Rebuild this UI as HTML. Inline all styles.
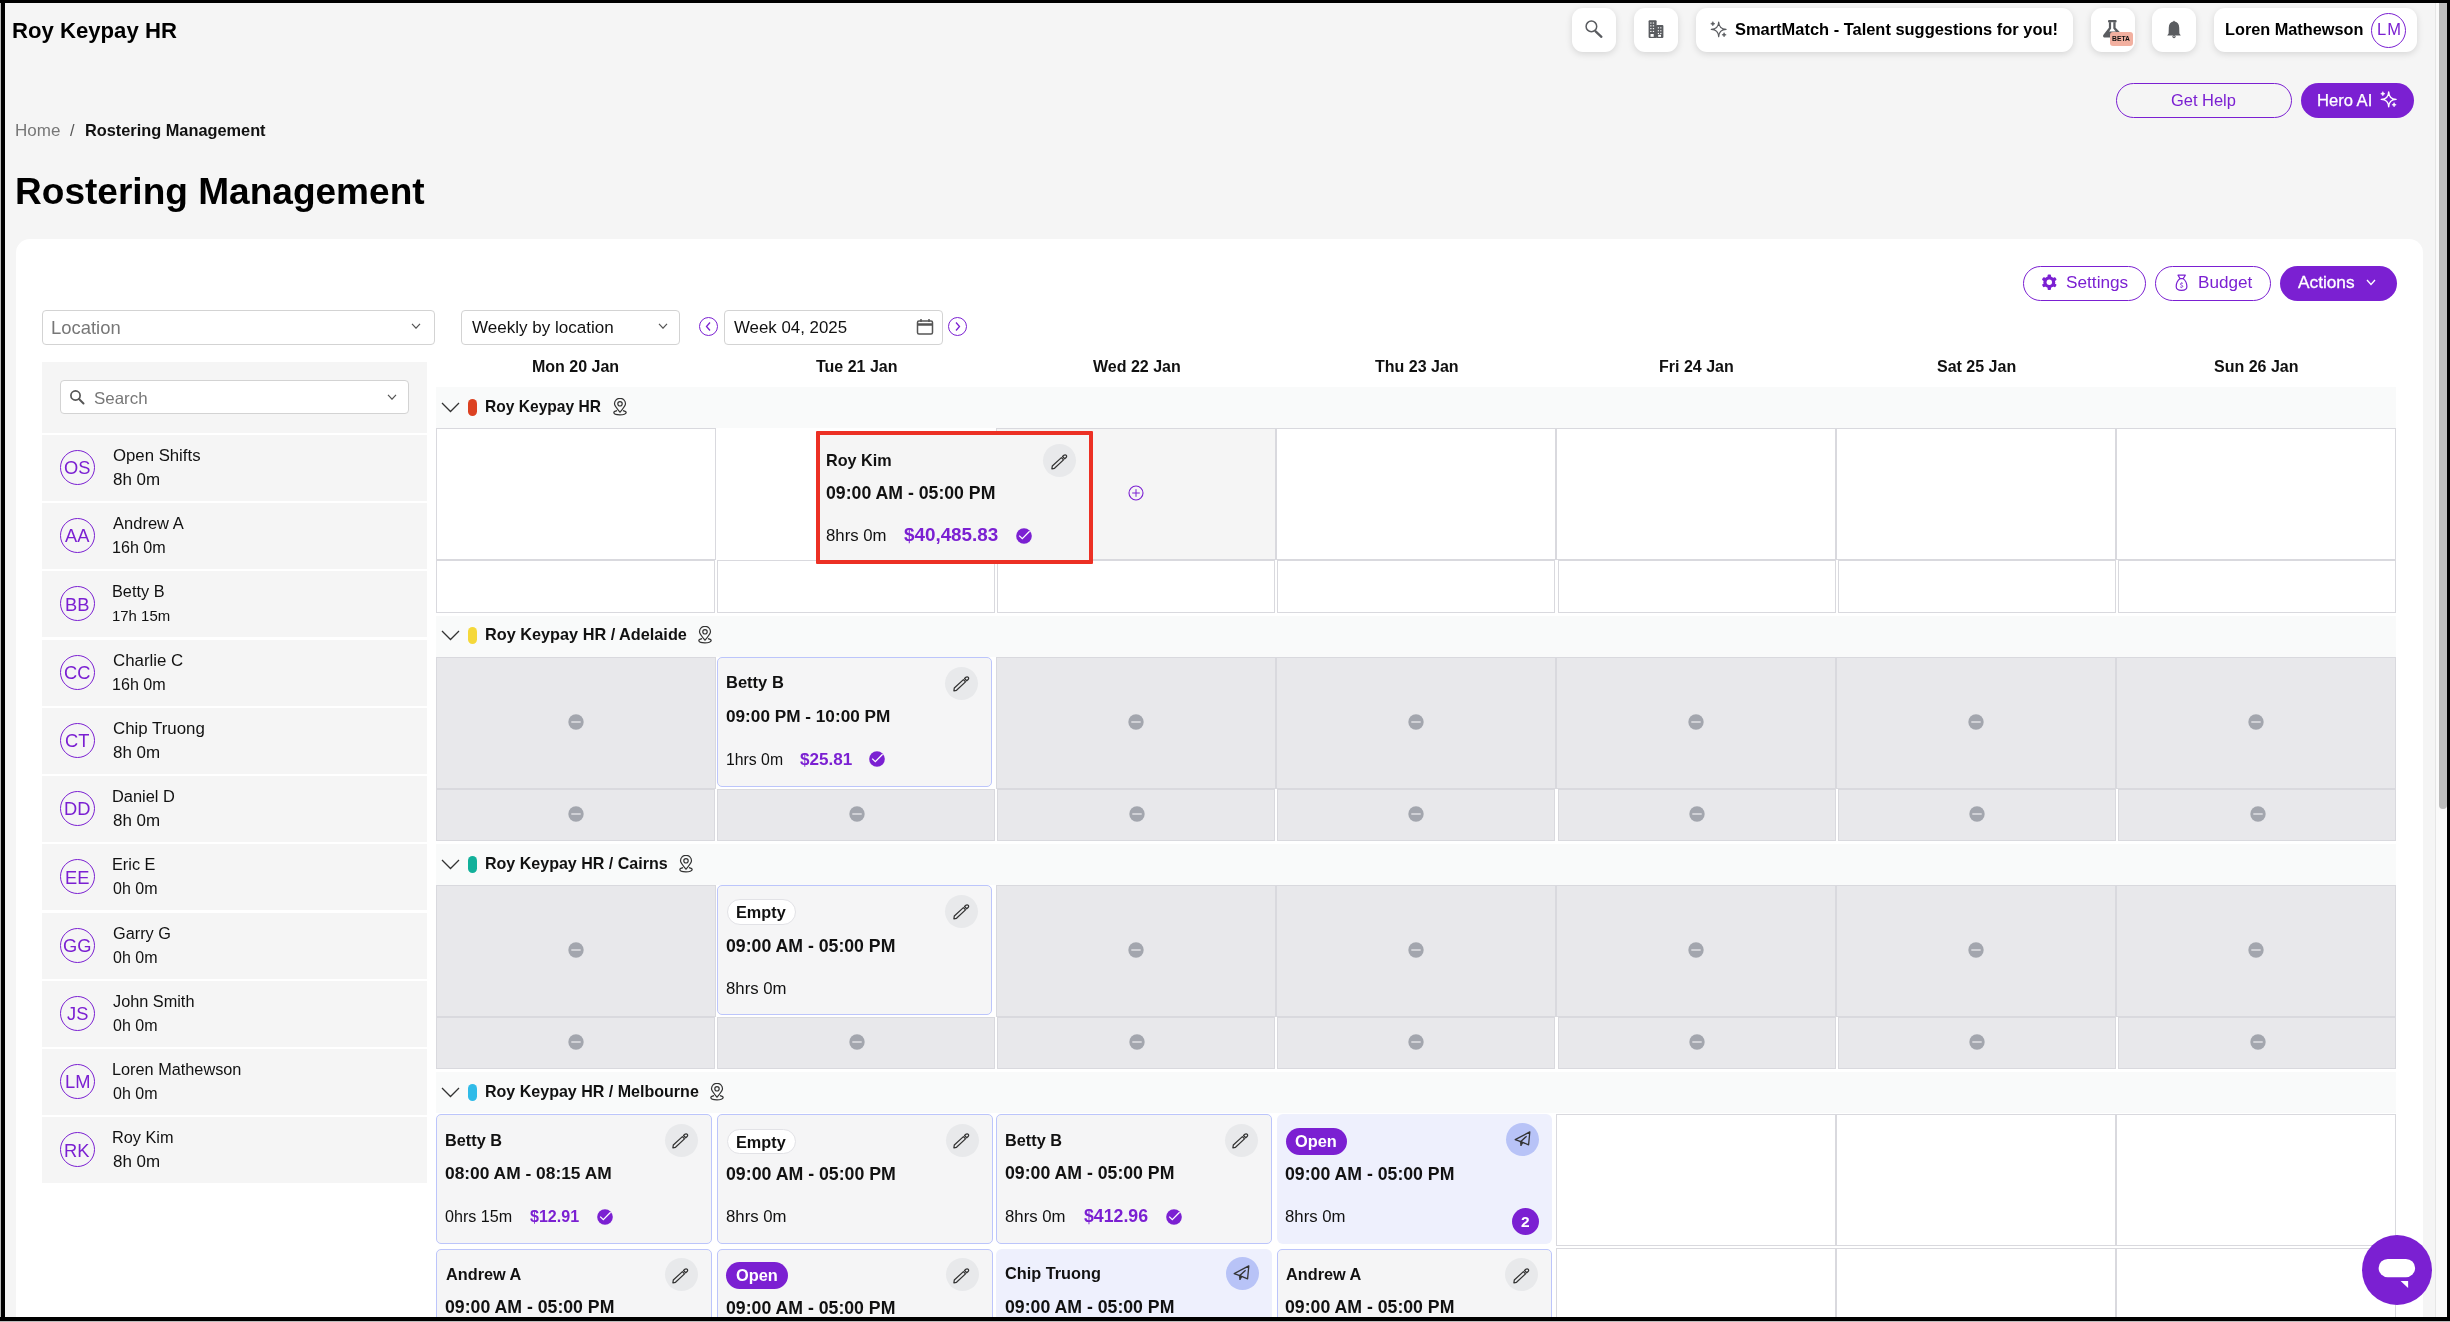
<!DOCTYPE html><html><head><meta charset="utf-8"><style>
html,body{margin:0;padding:0}
body{width:2450px;height:1322px;overflow:hidden;position:relative;background:#f5f5f5;font-family:"Liberation Sans",sans-serif;}
.t{position:absolute;line-height:0;white-space:nowrap;will-change:transform}
</style></head><body>
<div class="t" style="left:12.26px;top:30.50px;font-size:22.15px;font-weight:bold;color:#000;">Roy Keypay HR</div>
<div style="position:absolute;left:1572px;top:8px;width:44px;height:44px;box-sizing:border-box;background:#fff;border-radius:11px;box-shadow:0 2px 7px rgba(0,0,0,0.13)"></div>
<div style="position:absolute;left:1634px;top:8px;width:44px;height:44px;box-sizing:border-box;background:#fff;border-radius:11px;box-shadow:0 2px 7px rgba(0,0,0,0.13)"></div>
<div style="position:absolute;left:1696px;top:8px;width:377px;height:44px;box-sizing:border-box;background:#fff;border-radius:11px;box-shadow:0 2px 7px rgba(0,0,0,0.13)"></div>
<div style="position:absolute;left:2091px;top:8px;width:44px;height:44px;box-sizing:border-box;background:#fff;border-radius:11px;box-shadow:0 2px 7px rgba(0,0,0,0.13)"></div>
<div style="position:absolute;left:2152px;top:8px;width:44px;height:44px;box-sizing:border-box;background:#fff;border-radius:11px;box-shadow:0 2px 7px rgba(0,0,0,0.13)"></div>
<div style="position:absolute;left:2214px;top:8px;width:203px;height:44px;box-sizing:border-box;background:#fff;border-radius:11px;box-shadow:0 2px 7px rgba(0,0,0,0.13)"></div>
<svg style="position:absolute;left:1584px;top:20px" width="20" height="20" viewBox="0 0 20 20" fill="none"><circle cx="7.4" cy="6.4" r="5.3" stroke="#5a5c60" stroke-width="1.5"/><path d="M11.6 11.3 L17.4 16.8" stroke="#5a5c60" stroke-width="2.3" stroke-linecap="round"/></svg>
<svg style="position:absolute;left:1647px;top:19px" width="18" height="20" viewBox="0 0 18 20" fill="none"><rect x="1.6" y="1.3" width="8" height="17.7" rx="1" fill="#5a5c60"/><rect x="9" y="6.1" width="7.4" height="12.9" rx="1" fill="#5a5c60"/><rect x="3.2" y="3.5" width="1.3" height="1.1" fill="#fff"/><rect x="3.2" y="6.3" width="1.3" height="1.1" fill="#fff"/><rect x="3.2" y="9.1" width="1.3" height="1.1" fill="#fff"/><rect x="3.2" y="11.9" width="1.3" height="1.1" fill="#fff"/><rect x="5.8" y="3.5" width="1.3" height="1.1" fill="#fff"/><rect x="5.8" y="6.3" width="1.3" height="1.1" fill="#fff"/><rect x="5.8" y="9.1" width="1.3" height="1.1" fill="#fff"/><rect x="5.8" y="11.9" width="1.3" height="1.1" fill="#fff"/><rect x="10.8" y="8.3" width="1.2" height="1.1" fill="#fff"/><rect x="10.8" y="11.2" width="1.2" height="1.1" fill="#fff"/><rect x="10.8" y="13.9" width="1.2" height="1.1" fill="#fff"/><rect x="13.2" y="8.3" width="1.2" height="1.1" fill="#fff"/><rect x="13.2" y="11.2" width="1.2" height="1.1" fill="#fff"/><rect x="13.2" y="13.9" width="1.2" height="1.1" fill="#fff"/><rect x="3.5" y="15" width="3.2" height="2.8" fill="#fff"/><rect x="11.2" y="15.8" width="2.8" height="2" fill="#fff"/></svg>
<svg style="position:absolute;left:1710px;top:21px" width="17" height="17" viewBox="0 0 18 18" fill="none"><path d="M9.2 1.1000000000000005 Q9.511999999999999 8.588000000000001 17.0 8.9 Q9.511999999999999 9.212 9.2 16.7 Q8.888 9.212 1.3999999999999995 8.9 Q8.888 8.588000000000001 9.2 1.1000000000000005 Z" stroke="#5a5c60" stroke-width="1.25" stroke-linejoin="round"/><path d="M3.0 0.6000000000000001 Q3.3449999999999998 2.5549999999999997 5.3 2.9 Q3.3449999999999998 3.245 3.0 5.199999999999999 Q2.6550000000000002 3.245 0.7000000000000002 2.9 Q2.6550000000000002 2.5549999999999997 3.0 0.6000000000000001 Z" fill="#5a5c60" stroke="#5a5c60" stroke-width="0.5"/><path d="M14.9 12.3 Q15.245000000000001 14.254999999999999 17.2 14.6 Q15.245000000000001 14.945 14.9 16.9 Q14.555 14.945 12.600000000000001 14.6 Q14.555 14.254999999999999 14.9 12.3 Z" fill="#5a5c60" stroke="#5a5c60" stroke-width="0.5"/></svg>
<div class="t" style="left:1735.21px;top:29.00px;font-size:16.45px;font-weight:bold;color:#000;">SmartMatch - Talent suggestions for you!</div>
<svg style="position:absolute;left:2100px;top:19px" width="22" height="22" viewBox="0 0 22 22" fill="none"><rect x="8" y="1.1" width="8.6" height="2.4" rx="1" fill="#5a5c60"/><path d="M8.9 3.2 L15.6 3.2 L15.6 8.8 L20.5 13.8 L20.5 18.6 L5 18.6 C3.4 18.6 2.6 17.2 3.3 15.9 L8.9 8.8 Z" fill="#5a5c60"/><path d="M11.1 3.2 L13.3 3.2 L13.3 9.4 L15.8 12.4 L9.2 12.4 L11.1 9.4 Z" fill="#fff"/></svg>
<div style="position:absolute;left:2110px;top:32px;width:22.7px;height:13.7px;box-sizing:border-box;background:#f2b0a0;border-radius:3px"></div>
<div class="t" style="left:2112.26px;top:38.50px;font-size:6.77px;font-weight:bold;color:#111;">BETA</div>
<svg style="position:absolute;left:2164px;top:19px" width="20" height="22" viewBox="0 0 20 22" fill="none"><path d="M10 1.6 L10.8 2.4 C13.6 2.9 15.2 5.2 15.2 8.4 L15.4 14.6 L16.8 16.6 H3.2 L4.6 14.6 L4.8 8.4 C4.8 5.2 6.4 2.9 9.2 2.4 Z" fill="#5a5c60"/><circle cx="10" cy="17.6" r="1.6" fill="#5a5c60"/><circle cx="10" cy="17.6" r="0.6" fill="#fff"/></svg>
<div class="t" style="left:2224.54px;top:29.00px;font-size:16.29px;font-weight:bold;color:#000;">Loren Mathewson</div>
<div style="position:absolute;left:2371px;top:13px;width:35px;height:35px;box-sizing:border-box;border:1.3px solid #7b20d2;border-radius:50%"></div>
<div class="t" style="left:2377.07px;top:29.00px;font-size:16.50px;font-weight:normal;color:#7b20d2;letter-spacing:1px">LM</div>
<div style="position:absolute;left:2116px;top:83px;width:176px;height:35px;box-sizing:border-box;border:1.3px solid #7b20d2;border-radius:18px"></div>
<div class="t" style="left:2171.08px;top:100.00px;font-size:16.47px;font-weight:normal;color:#7b20d2;">Get Help</div>
<div style="position:absolute;left:2301px;top:83px;width:113px;height:35px;box-sizing:border-box;background:#7b20d2;border-radius:18px"></div>
<div class="t" style="left:2317.27px;top:100.50px;font-size:16.58px;font-weight:normal;color:#fff;-webkit-text-stroke:0.25px #fff">Hero AI</div>
<svg style="position:absolute;left:2380px;top:91px" width="17" height="17" viewBox="0 0 18 18" fill="none"><path d="M9.2 1.1000000000000005 Q9.511999999999999 8.588000000000001 17.0 8.9 Q9.511999999999999 9.212 9.2 16.7 Q8.888 9.212 1.3999999999999995 8.9 Q8.888 8.588000000000001 9.2 1.1000000000000005 Z" stroke="#fff" stroke-width="1.5" stroke-linejoin="round"/><path d="M3.0 0.6000000000000001 Q3.3449999999999998 2.5549999999999997 5.3 2.9 Q3.3449999999999998 3.245 3.0 5.199999999999999 Q2.6550000000000002 3.245 0.7000000000000002 2.9 Q2.6550000000000002 2.5549999999999997 3.0 0.6000000000000001 Z" fill="#fff" stroke="#fff" stroke-width="0.5"/><path d="M14.9 12.3 Q15.245000000000001 14.254999999999999 17.2 14.6 Q15.245000000000001 14.945 14.9 16.9 Q14.555 14.945 12.600000000000001 14.6 Q14.555 14.254999999999999 14.9 12.3 Z" fill="#fff" stroke="#fff" stroke-width="0.5"/></svg>
<div class="t" style="left:14.64px;top:130.50px;font-size:17.03px;font-weight:normal;color:#777;">Home</div>
<div class="t" style="left:69.50px;top:130.00px;font-size:16.20px;font-weight:normal;color:#555;">/</div>
<div class="t" style="left:85.19px;top:130.00px;font-size:16.33px;font-weight:bold;color:#111;">Rostering Management</div>
<div class="t" style="left:14.99px;top:191.00px;font-size:37.05px;font-weight:bold;color:#000;">Rostering Management</div>
<div style="position:absolute;left:16px;top:239px;width:2407px;height:1200px;box-sizing:border-box;background:#fff;border-radius:14px"></div>
<div style="position:absolute;left:2023px;top:266px;width:123px;height:35px;box-sizing:border-box;border:1.3px solid #7b20d2;border-radius:18px"></div>
<svg style="position:absolute;left:2041px;top:274px" width="17" height="17" viewBox="0 0 17 17" fill="none"><g transform="translate(8.3 8.2)" fill="#7b20d2"><circle r="5.9"/><rect x="-1.7" y="-7.7" width="3.4" height="3.6" rx="0.9" transform="rotate(0)"/><rect x="-1.7" y="-7.7" width="3.4" height="3.6" rx="0.9" transform="rotate(60)"/><rect x="-1.7" y="-7.7" width="3.4" height="3.6" rx="0.9" transform="rotate(120)"/><rect x="-1.7" y="-7.7" width="3.4" height="3.6" rx="0.9" transform="rotate(180)"/><rect x="-1.7" y="-7.7" width="3.4" height="3.6" rx="0.9" transform="rotate(240)"/><rect x="-1.7" y="-7.7" width="3.4" height="3.6" rx="0.9" transform="rotate(300)"/><circle r="2.7" fill="#fff"/></g></svg>
<div class="t" style="left:2065.52px;top:282.00px;font-size:17.23px;font-weight:normal;color:#7b20d2;">Settings</div>
<div style="position:absolute;left:2155px;top:266px;width:116px;height:35px;box-sizing:border-box;border:1.3px solid #7b20d2;border-radius:18px"></div>
<svg style="position:absolute;left:2175px;top:274px" width="13" height="18" viewBox="0 0 13 18" fill="none"><path d="M3 1.2 H10.3 L8.2 4.6 H5.1 Z" stroke="#7b20d2" stroke-width="1.2" stroke-linejoin="round"/><path d="M5.1 4.6 C2.5 6.5 1.2 9.8 1.2 12.6 C1.2 15.3 3 16.4 6.6 16.4 C10.2 16.4 11.9 15.3 11.9 12.6 C11.9 9.8 10.6 6.5 8.2 4.6" stroke="#7b20d2" stroke-width="1.2"/><path d="M7.9 9.6 C7.5 9.0 5.5 8.9 5.4 10.1 C5.3 11.2 7.9 11.1 7.8 12.4 C7.7 13.5 5.6 13.4 5.1 12.8 M6.6 8.5 V9.1 M6.6 13.5 V14.1" stroke="#7b20d2" stroke-width="0.9"/></svg>
<div class="t" style="left:2197.53px;top:282.50px;font-size:17.11px;font-weight:normal;color:#7b20d2;">Budget</div>
<div style="position:absolute;left:2280px;top:266px;width:117px;height:35px;box-sizing:border-box;background:#7b20d2;border-radius:18px"></div>
<div class="t" style="left:2298.20px;top:282.00px;font-size:17.26px;font-weight:normal;color:#fff;-webkit-text-stroke:0.3px #fff">Actions</div>
<svg style="position:absolute;left:2366px;top:279px" width="10" height="7" viewBox="0 0 10 7" fill="none"><path d="M1 1 L5 5.5 L9 1" stroke="#fff" stroke-width="1.3" fill="none"/></svg>
<div style="position:absolute;left:42px;top:310px;width:393px;height:35px;box-sizing:border-box;border:1px solid #d3d3d3;border-radius:4px;background:#fff"></div>
<div class="t" style="left:50.73px;top:327.50px;font-size:18.43px;font-weight:normal;color:#777;">Location</div>
<svg style="position:absolute;left:411px;top:323px" width="10" height="6" viewBox="0 0 10 6" fill="none"><path d="M1 0.8 L5.0 5.2 L9 0.8" stroke="#555" stroke-width="1.2" fill="none"/></svg>
<div style="position:absolute;left:461px;top:310px;width:219px;height:35px;box-sizing:border-box;border:1px solid #d3d3d3;border-radius:4px;background:#fff"></div>
<div class="t" style="left:471.91px;top:327.50px;font-size:17.04px;font-weight:normal;color:#111;">Weekly by location</div>
<svg style="position:absolute;left:658px;top:323px" width="10" height="6" viewBox="0 0 10 6" fill="none"><path d="M1 0.8 L5.0 5.2 L9 0.8" stroke="#555" stroke-width="1.2" fill="none"/></svg>
<div style="position:absolute;left:699px;top:317px;width:19px;height:19px;box-sizing:border-box;border:1.3px solid #7b20d2;border-radius:50%"></div>
<svg style="position:absolute;left:704px;top:321px" width="9" height="11" viewBox="0 0 9 11" fill="none"><path d="M6 1.5 L2.5 5.5 L6 9.5" stroke="#7b20d2" stroke-width="1.3" fill="none"/></svg>
<div style="position:absolute;left:723.5px;top:310px;width:219px;height:35px;box-sizing:border-box;border:1px solid #d3d3d3;border-radius:4px;background:#fff"></div>
<div class="t" style="left:733.72px;top:327.50px;font-size:16.85px;font-weight:normal;color:#111;">Week 04, 2025</div>
<svg style="position:absolute;left:916px;top:318px" width="18" height="17" viewBox="0 0 18 17" fill="none"><rect x="1.5" y="3" width="15" height="13" rx="1.5" stroke="#555" stroke-width="1.5"/><path d="M1.5 6.5 H16.5" stroke="#555" stroke-width="2.5"/><path d="M5 1 V4 M13 1 V4" stroke="#555" stroke-width="1.5"/></svg>
<div style="position:absolute;left:947.5px;top:317px;width:19px;height:19px;box-sizing:border-box;border:1.3px solid #7b20d2;border-radius:50%"></div>
<svg style="position:absolute;left:953px;top:321px" width="9" height="11" viewBox="0 0 9 11" fill="none"><path d="M3 1.5 L6.5 5.5 L3 9.5" stroke="#7b20d2" stroke-width="1.3" fill="none"/></svg>
<div style="position:absolute;left:42px;top:362px;width:385px;height:71px;box-sizing:border-box;background:#f5f5f5"></div>
<div style="position:absolute;left:60px;top:380px;width:349px;height:34px;box-sizing:border-box;border:1px solid #d3d3d3;border-radius:4px;background:#fff"></div>
<svg style="position:absolute;left:69px;top:389px" width="16" height="16" viewBox="0 0 16 16" fill="none"><circle cx="6.5" cy="6.5" r="4.6" stroke="#555" stroke-width="1.7"/><path d="M10 10 L14.5 14.5" stroke="#555" stroke-width="2" stroke-linecap="round"/></svg>
<div class="t" style="left:93.94px;top:398.50px;font-size:16.92px;font-weight:normal;color:#777;">Search</div>
<svg style="position:absolute;left:387px;top:394px" width="10" height="6" viewBox="0 0 10 6" fill="none"><path d="M1 0.8 L5.0 5.2 L9 0.8" stroke="#555" stroke-width="1.2" fill="none"/></svg>
<div style="position:absolute;left:42px;top:434.8px;width:385px;height:66px;box-sizing:border-box;background:#f5f5f5"></div>
<div style="position:absolute;left:60px;top:449.8px;width:35px;height:35px;box-sizing:border-box;border:1.3px solid #7b20d2;border-radius:50%"></div>
<div class="t" style="left:64.28px;top:467.50px;font-size:18.30px;font-weight:normal;color:#7b20d2;">OS</div>
<div class="t" style="left:112.65px;top:455.50px;font-size:16.75px;font-weight:normal;color:#111;">Open Shifts</div>
<div class="t" style="left:112.64px;top:479.50px;font-size:16.97px;font-weight:normal;color:#111;">8h 0m</div>
<div style="position:absolute;left:42px;top:503.05px;width:385px;height:66px;box-sizing:border-box;background:#f5f5f5"></div>
<div style="position:absolute;left:60px;top:518.05px;width:35px;height:35px;box-sizing:border-box;border:1.3px solid #7b20d2;border-radius:50%"></div>
<div class="t" style="left:65.33px;top:535.50px;font-size:18.30px;font-weight:normal;color:#7b20d2;">AA</div>
<div class="t" style="left:113.40px;top:523.50px;font-size:16.52px;font-weight:normal;color:#111;">Andrew A</div>
<div class="t" style="left:112.19px;top:547.00px;font-size:16.12px;font-weight:normal;color:#111;">16h 0m</div>
<div style="position:absolute;left:42px;top:571.3px;width:385px;height:66px;box-sizing:border-box;background:#f5f5f5"></div>
<div style="position:absolute;left:60px;top:586.3px;width:35px;height:35px;box-sizing:border-box;border:1.3px solid #7b20d2;border-radius:50%"></div>
<div class="t" style="left:65.06px;top:604.50px;font-size:18.30px;font-weight:normal;color:#7b20d2;">BB</div>
<div class="t" style="left:112.10px;top:591.00px;font-size:16.30px;font-weight:normal;color:#111;">Betty B</div>
<div class="t" style="left:112.28px;top:615.50px;font-size:14.94px;font-weight:normal;color:#111;">17h 15m</div>
<div style="position:absolute;left:42px;top:639.55px;width:385px;height:66px;box-sizing:border-box;background:#f5f5f5"></div>
<div style="position:absolute;left:60px;top:654.55px;width:35px;height:35px;box-sizing:border-box;border:1.3px solid #7b20d2;border-radius:50%"></div>
<div class="t" style="left:64.19px;top:672.50px;font-size:18.30px;font-weight:normal;color:#7b20d2;">CC</div>
<div class="t" style="left:112.56px;top:660.50px;font-size:16.86px;font-weight:normal;color:#111;">Charlie C</div>
<div class="t" style="left:112.19px;top:684.00px;font-size:16.12px;font-weight:normal;color:#111;">16h 0m</div>
<div style="position:absolute;left:42px;top:707.8px;width:385px;height:66px;box-sizing:border-box;background:#f5f5f5"></div>
<div style="position:absolute;left:60px;top:722.8px;width:35px;height:35px;box-sizing:border-box;border:1.3px solid #7b20d2;border-radius:50%"></div>
<div class="t" style="left:65.06px;top:740.50px;font-size:18.30px;font-weight:normal;color:#7b20d2;">CT</div>
<div class="t" style="left:112.56px;top:728.50px;font-size:16.87px;font-weight:normal;color:#111;">Chip Truong</div>
<div class="t" style="left:112.64px;top:752.50px;font-size:16.97px;font-weight:normal;color:#111;">8h 0m</div>
<div style="position:absolute;left:42px;top:776.05px;width:385px;height:66px;box-sizing:border-box;background:#f5f5f5"></div>
<div style="position:absolute;left:60px;top:791.05px;width:35px;height:35px;box-sizing:border-box;border:1.3px solid #7b20d2;border-radius:50%"></div>
<div class="t" style="left:64.00px;top:808.50px;font-size:18.30px;font-weight:normal;color:#7b20d2;">DD</div>
<div class="t" style="left:112.09px;top:796.00px;font-size:16.42px;font-weight:normal;color:#111;">Daniel D</div>
<div class="t" style="left:112.64px;top:820.50px;font-size:16.97px;font-weight:normal;color:#111;">8h 0m</div>
<div style="position:absolute;left:42px;top:844.3px;width:385px;height:66px;box-sizing:border-box;background:#f5f5f5"></div>
<div style="position:absolute;left:60px;top:859.3px;width:35px;height:35px;box-sizing:border-box;border:1.3px solid #7b20d2;border-radius:50%"></div>
<div class="t" style="left:64.96px;top:877.50px;font-size:18.30px;font-weight:normal;color:#7b20d2;">EE</div>
<div class="t" style="left:112.10px;top:864.00px;font-size:16.30px;font-weight:normal;color:#111;">Eric E</div>
<div class="t" style="left:112.76px;top:888.50px;font-size:16.00px;font-weight:normal;color:#111;">0h 0m</div>
<div style="position:absolute;left:42px;top:912.55px;width:385px;height:66px;box-sizing:border-box;background:#f5f5f5"></div>
<div style="position:absolute;left:60px;top:927.55px;width:35px;height:35px;box-sizing:border-box;border:1.3px solid #7b20d2;border-radius:50%"></div>
<div class="t" style="left:63.45px;top:945.50px;font-size:18.30px;font-weight:normal;color:#7b20d2;">GG</div>
<div class="t" style="left:112.59px;top:933.00px;font-size:16.30px;font-weight:normal;color:#111;">Garry G</div>
<div class="t" style="left:112.76px;top:957.50px;font-size:16.00px;font-weight:normal;color:#111;">0h 0m</div>
<div style="position:absolute;left:42px;top:980.8px;width:385px;height:66px;box-sizing:border-box;background:#f5f5f5"></div>
<div style="position:absolute;left:60px;top:995.8px;width:35px;height:35px;box-sizing:border-box;border:1.3px solid #7b20d2;border-radius:50%"></div>
<div class="t" style="left:67.11px;top:1013.50px;font-size:18.30px;font-weight:normal;color:#7b20d2;">JS</div>
<div class="t" style="left:113.16px;top:1001.00px;font-size:16.30px;font-weight:normal;color:#111;">John Smith</div>
<div class="t" style="left:112.76px;top:1025.50px;font-size:16.00px;font-weight:normal;color:#111;">0h 0m</div>
<div style="position:absolute;left:42px;top:1049.05px;width:385px;height:66px;box-sizing:border-box;background:#f5f5f5"></div>
<div style="position:absolute;left:60px;top:1064.05px;width:35px;height:35px;box-sizing:border-box;border:1.3px solid #7b20d2;border-radius:50%"></div>
<div class="t" style="left:64.83px;top:1081.50px;font-size:18.30px;font-weight:normal;color:#7b20d2;">LM</div>
<div class="t" style="left:112.10px;top:1069.00px;font-size:16.30px;font-weight:normal;color:#111;">Loren Mathewson</div>
<div class="t" style="left:112.76px;top:1093.50px;font-size:16.00px;font-weight:normal;color:#111;">0h 0m</div>
<div style="position:absolute;left:42px;top:1117.3px;width:385px;height:66px;box-sizing:border-box;background:#f5f5f5"></div>
<div style="position:absolute;left:60px;top:1132.3px;width:35px;height:35px;box-sizing:border-box;border:1.3px solid #7b20d2;border-radius:50%"></div>
<div class="t" style="left:64.19px;top:1150.50px;font-size:18.30px;font-weight:normal;color:#7b20d2;">RK</div>
<div class="t" style="left:112.10px;top:1137.00px;font-size:16.30px;font-weight:normal;color:#111;">Roy Kim</div>
<div class="t" style="left:112.64px;top:1161.50px;font-size:16.97px;font-weight:normal;color:#111;">8h 0m</div>
<div class="t" style="left:532.40px;top:366.50px;font-size:16.00px;font-weight:bold;color:#111;">Mon 20 Jan</div>
<div class="t" style="left:815.64px;top:366.50px;font-size:16.00px;font-weight:bold;color:#111;">Tue 21 Jan</div>
<div class="t" style="left:1092.60px;top:366.50px;font-size:16.00px;font-weight:bold;color:#111;">Wed 22 Jan</div>
<div class="t" style="left:1374.60px;top:366.50px;font-size:16.00px;font-weight:bold;color:#111;">Thu 23 Jan</div>
<div class="t" style="left:1658.60px;top:366.50px;font-size:16.00px;font-weight:bold;color:#111;">Fri 24 Jan</div>
<div class="t" style="left:1936.68px;top:366.50px;font-size:16.00px;font-weight:bold;color:#111;">Sat 25 Jan</div>
<div class="t" style="left:2214.00px;top:366.50px;font-size:16.00px;font-weight:bold;color:#111;">Sun 26 Jan</div>
<div style="position:absolute;left:436px;top:387.2px;width:1960px;height:41px;box-sizing:border-box;background:#f9fafa"></div>
<svg style="position:absolute;left:441px;top:401.7px" width="19" height="11" viewBox="0 0 19 11" fill="none"><path d="M1 1 L9.5 9.5 L18 1" stroke="#333" stroke-width="1.3" fill="none"/></svg>
<div style="position:absolute;left:468px;top:398.9px;width:9px;height:17px;box-sizing:border-box;background:#dc4121;border-radius:5px"></div>
<div class="t" style="left:485.49px;top:406.50px;font-size:15.58px;font-weight:bold;color:#111;">Roy Keypay HR</div>
<svg style="position:absolute;left:612.7px;top:397.7px" width="14" height="18" viewBox="0 0 14 18" fill="none"><path d="M7 14.2 C4 10.5 1.5 8 1.5 5.8 A5.5 5.5 0 0 1 12.5 5.8 C12.5 8 10 10.5 7 14.2 Z" stroke="#333" stroke-width="1.2"/><circle cx="7" cy="5.8" r="2.2" stroke="#333" stroke-width="1.2"/><path d="M4 12.6 C1.8 13.1 0.8 13.8 0.8 14.6 C0.8 15.9 3.6 16.9 7 16.9 C10.4 16.9 13.2 15.9 13.2 14.6 C13.2 13.8 12.2 13.1 10 12.6" stroke="#333" stroke-width="1.2"/></svg>
<div style="position:absolute;left:436px;top:428px;width:280px;height:132px;box-sizing:border-box;border:1px solid #d9d9de;background:#fff"></div>
<div style="position:absolute;left:996px;top:428px;width:280px;height:132px;box-sizing:border-box;border:1px solid #d9d9de;background:#f5f5f5"></div>
<div style="position:absolute;left:1276px;top:428px;width:280px;height:132px;box-sizing:border-box;border:1px solid #d9d9de;background:#fff"></div>
<div style="position:absolute;left:1556px;top:428px;width:280px;height:132px;box-sizing:border-box;border:1px solid #d9d9de;background:#fff"></div>
<div style="position:absolute;left:1836px;top:428px;width:280px;height:132px;box-sizing:border-box;border:1px solid #d9d9de;background:#fff"></div>
<div style="position:absolute;left:2116px;top:428px;width:280px;height:132px;box-sizing:border-box;border:1px solid #d9d9de;background:#fff"></div>
<div style="position:absolute;left:436px;top:560px;width:279px;height:53px;box-sizing:border-box;border:1px solid #d9d9de;background:#fff"></div>
<div style="position:absolute;left:717px;top:560px;width:278px;height:53px;box-sizing:border-box;border:1px solid #d9d9de;background:#fff"></div>
<div style="position:absolute;left:997px;top:560px;width:278px;height:53px;box-sizing:border-box;border:1px solid #d9d9de;background:#fff"></div>
<div style="position:absolute;left:1277px;top:560px;width:278px;height:53px;box-sizing:border-box;border:1px solid #d9d9de;background:#fff"></div>
<div style="position:absolute;left:1558px;top:560px;width:278px;height:53px;box-sizing:border-box;border:1px solid #d9d9de;background:#fff"></div>
<div style="position:absolute;left:1838px;top:560px;width:278px;height:53px;box-sizing:border-box;border:1px solid #d9d9de;background:#fff"></div>
<div style="position:absolute;left:2118px;top:560px;width:278px;height:53px;box-sizing:border-box;border:1px solid #d9d9de;background:#fff"></div>
<svg style="position:absolute;left:1128px;top:485px" width="16" height="16" viewBox="0 0 16 16" fill="none"><circle cx="8" cy="8" r="7" stroke="#7b20d2" stroke-width="1.1"/><path d="M8 4.2 V11.8 M4.2 8 H11.8" stroke="#7b20d2" stroke-width="1.0"/></svg>
<div style="position:absolute;left:815.5px;top:431px;width:277.5px;height:132.5px;box-sizing:border-box;background:#f5f5f5;border:4.3px solid #ec3024;border-radius:1px"></div>
<div class="t" style="left:825.55px;top:460.00px;font-size:16.20px;font-weight:bold;color:#111;">Roy Kim</div>
<div class="t" style="left:825.89px;top:493.00px;font-size:17.71px;font-weight:bold;color:#111;">09:00 AM - 05:00 PM</div>
<div class="t" style="left:825.85px;top:535.50px;font-size:16.75px;font-weight:normal;color:#111;">8hrs 0m</div>
<div class="t" style="left:904.42px;top:534.50px;font-size:18.83px;font-weight:bold;color:#7b20d2;">$40,485.83</div>
<svg style="position:absolute;left:1015.2px;top:527.2px" width="18" height="18" viewBox="0 0 18 18" fill="none"><circle cx="9" cy="9" r="7.8" fill="#7b20d2"/><path d="M4.2 8.6 L7.3 11.6 L14.6 4.3" stroke="#fff" stroke-width="1.3" fill="none"/></svg>
<div style="position:absolute;left:1043.0px;top:444.4px;width:33px;height:33px;box-sizing:border-box;background:#e8e9eb;border-radius:50%"></div>
<svg style="position:absolute;left:1050.5px;top:451.9px" width="18" height="18" viewBox="0 0 18 18" fill="none"><path d="M0.9 16.9 L1.3 14.0 L10.4 5.6 L12.5 7.9 L3.5 16.3 Z" stroke="#333" stroke-width="1.25" stroke-linejoin="round"/><path d="M11.5 4.5 L12.9 3.2 C13.6 2.6 14.6 2.6 15.2 3.3 C15.8 3.9 15.8 4.9 15.1 5.5 L13.7 6.8 Z" stroke="#333" stroke-width="1.25" stroke-linejoin="round"/></svg>
<div style="position:absolute;left:436px;top:615.6px;width:1960px;height:41px;box-sizing:border-box;background:#f9fafa"></div>
<svg style="position:absolute;left:441px;top:630.1px" width="19" height="11" viewBox="0 0 19 11" fill="none"><path d="M1 1 L9.5 9.5 L18 1" stroke="#333" stroke-width="1.3" fill="none"/></svg>
<div style="position:absolute;left:468px;top:627.3000000000001px;width:9px;height:17px;box-sizing:border-box;background:#f5d83a;border-radius:5px"></div>
<div class="t" style="left:485.44px;top:634.00px;font-size:16.28px;font-weight:bold;color:#111;">Roy Keypay HR / Adelaide</div>
<svg style="position:absolute;left:698.2px;top:626.1px" width="14" height="18" viewBox="0 0 14 18" fill="none"><path d="M7 14.2 C4 10.5 1.5 8 1.5 5.8 A5.5 5.5 0 0 1 12.5 5.8 C12.5 8 10 10.5 7 14.2 Z" stroke="#333" stroke-width="1.2"/><circle cx="7" cy="5.8" r="2.2" stroke="#333" stroke-width="1.2"/><path d="M4 12.6 C1.8 13.1 0.8 13.8 0.8 14.6 C0.8 15.9 3.6 16.9 7 16.9 C10.4 16.9 13.2 15.9 13.2 14.6 C13.2 13.8 12.2 13.1 10 12.6" stroke="#333" stroke-width="1.2"/></svg>
<div style="position:absolute;left:436px;top:657px;width:280px;height:132px;box-sizing:border-box;border:1px solid #d9d9de;background:#e8e8eb"></div>
<svg style="position:absolute;left:568px;top:714.2px" width="16" height="16" viewBox="0 0 16 16" fill="none"><circle cx="8" cy="8" r="7.7" fill="#a3a6ae"/><rect x="3.3" y="7.35" width="9.4" height="1.3" fill="#e8e8eb"/></svg>
<div style="position:absolute;left:996px;top:657px;width:280px;height:132px;box-sizing:border-box;border:1px solid #d9d9de;background:#e8e8eb"></div>
<svg style="position:absolute;left:1128px;top:714.2px" width="16" height="16" viewBox="0 0 16 16" fill="none"><circle cx="8" cy="8" r="7.7" fill="#a3a6ae"/><rect x="3.3" y="7.35" width="9.4" height="1.3" fill="#e8e8eb"/></svg>
<div style="position:absolute;left:1276px;top:657px;width:280px;height:132px;box-sizing:border-box;border:1px solid #d9d9de;background:#e8e8eb"></div>
<svg style="position:absolute;left:1408px;top:714.2px" width="16" height="16" viewBox="0 0 16 16" fill="none"><circle cx="8" cy="8" r="7.7" fill="#a3a6ae"/><rect x="3.3" y="7.35" width="9.4" height="1.3" fill="#e8e8eb"/></svg>
<div style="position:absolute;left:1556px;top:657px;width:280px;height:132px;box-sizing:border-box;border:1px solid #d9d9de;background:#e8e8eb"></div>
<svg style="position:absolute;left:1688px;top:714.2px" width="16" height="16" viewBox="0 0 16 16" fill="none"><circle cx="8" cy="8" r="7.7" fill="#a3a6ae"/><rect x="3.3" y="7.35" width="9.4" height="1.3" fill="#e8e8eb"/></svg>
<div style="position:absolute;left:1836px;top:657px;width:280px;height:132px;box-sizing:border-box;border:1px solid #d9d9de;background:#e8e8eb"></div>
<svg style="position:absolute;left:1968px;top:714.2px" width="16" height="16" viewBox="0 0 16 16" fill="none"><circle cx="8" cy="8" r="7.7" fill="#a3a6ae"/><rect x="3.3" y="7.35" width="9.4" height="1.3" fill="#e8e8eb"/></svg>
<div style="position:absolute;left:2116px;top:657px;width:280px;height:132px;box-sizing:border-box;border:1px solid #d9d9de;background:#e8e8eb"></div>
<svg style="position:absolute;left:2248px;top:714.2px" width="16" height="16" viewBox="0 0 16 16" fill="none"><circle cx="8" cy="8" r="7.7" fill="#a3a6ae"/><rect x="3.3" y="7.35" width="9.4" height="1.3" fill="#e8e8eb"/></svg>
<div style="position:absolute;left:436px;top:789px;width:279px;height:52px;box-sizing:border-box;border:1px solid #d9d9de;background:#e8e8eb"></div>
<svg style="position:absolute;left:567.8px;top:806.4px" width="16" height="16" viewBox="0 0 16 16" fill="none"><circle cx="8" cy="8" r="7.7" fill="#a3a6ae"/><rect x="3.3" y="7.35" width="9.4" height="1.3" fill="#e8e8eb"/></svg>
<div style="position:absolute;left:717px;top:789px;width:278px;height:52px;box-sizing:border-box;border:1px solid #d9d9de;background:#e8e8eb"></div>
<svg style="position:absolute;left:848.6500000000001px;top:806.4px" width="16" height="16" viewBox="0 0 16 16" fill="none"><circle cx="8" cy="8" r="7.7" fill="#a3a6ae"/><rect x="3.3" y="7.35" width="9.4" height="1.3" fill="#e8e8eb"/></svg>
<div style="position:absolute;left:997px;top:789px;width:278px;height:52px;box-sizing:border-box;border:1px solid #d9d9de;background:#e8e8eb"></div>
<svg style="position:absolute;left:1128.55px;top:806.4px" width="16" height="16" viewBox="0 0 16 16" fill="none"><circle cx="8" cy="8" r="7.7" fill="#a3a6ae"/><rect x="3.3" y="7.35" width="9.4" height="1.3" fill="#e8e8eb"/></svg>
<div style="position:absolute;left:1277px;top:789px;width:278px;height:52px;box-sizing:border-box;border:1px solid #d9d9de;background:#e8e8eb"></div>
<svg style="position:absolute;left:1408.4499999999998px;top:806.4px" width="16" height="16" viewBox="0 0 16 16" fill="none"><circle cx="8" cy="8" r="7.7" fill="#a3a6ae"/><rect x="3.3" y="7.35" width="9.4" height="1.3" fill="#e8e8eb"/></svg>
<div style="position:absolute;left:1558px;top:789px;width:278px;height:52px;box-sizing:border-box;border:1px solid #d9d9de;background:#e8e8eb"></div>
<svg style="position:absolute;left:1689.45px;top:806.4px" width="16" height="16" viewBox="0 0 16 16" fill="none"><circle cx="8" cy="8" r="7.7" fill="#a3a6ae"/><rect x="3.3" y="7.35" width="9.4" height="1.3" fill="#e8e8eb"/></svg>
<div style="position:absolute;left:1838px;top:789px;width:278px;height:52px;box-sizing:border-box;border:1px solid #d9d9de;background:#e8e8eb"></div>
<svg style="position:absolute;left:1969.3999999999999px;top:806.4px" width="16" height="16" viewBox="0 0 16 16" fill="none"><circle cx="8" cy="8" r="7.7" fill="#a3a6ae"/><rect x="3.3" y="7.35" width="9.4" height="1.3" fill="#e8e8eb"/></svg>
<div style="position:absolute;left:2118px;top:789px;width:278px;height:52px;box-sizing:border-box;border:1px solid #d9d9de;background:#e8e8eb"></div>
<svg style="position:absolute;left:2249.6px;top:806.4px" width="16" height="16" viewBox="0 0 16 16" fill="none"><circle cx="8" cy="8" r="7.7" fill="#a3a6ae"/><rect x="3.3" y="7.35" width="9.4" height="1.3" fill="#e8e8eb"/></svg>
<div style="position:absolute;left:717px;top:657px;width:275px;height:129.5px;box-sizing:border-box;background:#f5f5f6;border:1px solid #bcc5fb;border-radius:5px"></div>
<div class="t" style="left:725.63px;top:682.50px;font-size:16.52px;font-weight:bold;color:#111;">Betty B</div>
<div class="t" style="left:726.01px;top:716.00px;font-size:17.21px;font-weight:bold;color:#111;">09:00 PM - 10:00 PM</div>
<div class="t" style="left:725.52px;top:759.50px;font-size:15.80px;font-weight:normal;color:#111;">1hrs 0m</div>
<div class="t" style="left:800.24px;top:759.50px;font-size:17.09px;font-weight:bold;color:#7b20d2;">$25.81</div>
<svg style="position:absolute;left:868.4px;top:749.6px" width="18" height="18" viewBox="0 0 18 18" fill="none"><circle cx="9" cy="9" r="7.8" fill="#7b20d2"/><path d="M4.2 8.6 L7.3 11.6 L14.6 4.3" stroke="#fff" stroke-width="1.3" fill="none"/></svg>
<div style="position:absolute;left:945.0px;top:666.5px;width:33px;height:33px;box-sizing:border-box;background:#e8e9eb;border-radius:50%"></div>
<svg style="position:absolute;left:952.5px;top:674px" width="18" height="18" viewBox="0 0 18 18" fill="none"><path d="M0.9 16.9 L1.3 14.0 L10.4 5.6 L12.5 7.9 L3.5 16.3 Z" stroke="#333" stroke-width="1.25" stroke-linejoin="round"/><path d="M11.5 4.5 L12.9 3.2 C13.6 2.6 14.6 2.6 15.2 3.3 C15.8 3.9 15.8 4.9 15.1 5.5 L13.7 6.8 Z" stroke="#333" stroke-width="1.25" stroke-linejoin="round"/></svg>
<div style="position:absolute;left:436px;top:844.0px;width:1960px;height:41px;box-sizing:border-box;background:#f9fafa"></div>
<svg style="position:absolute;left:441px;top:858.5px" width="19" height="11" viewBox="0 0 19 11" fill="none"><path d="M1 1 L9.5 9.5 L18 1" stroke="#333" stroke-width="1.3" fill="none"/></svg>
<div style="position:absolute;left:468px;top:855.7px;width:9px;height:17px;box-sizing:border-box;background:#12b09a;border-radius:5px"></div>
<div class="t" style="left:485.46px;top:863.00px;font-size:16.05px;font-weight:bold;color:#111;">Roy Keypay HR / Cairns</div>
<svg style="position:absolute;left:679.0px;top:854.5px" width="14" height="18" viewBox="0 0 14 18" fill="none"><path d="M7 14.2 C4 10.5 1.5 8 1.5 5.8 A5.5 5.5 0 0 1 12.5 5.8 C12.5 8 10 10.5 7 14.2 Z" stroke="#333" stroke-width="1.2"/><circle cx="7" cy="5.8" r="2.2" stroke="#333" stroke-width="1.2"/><path d="M4 12.6 C1.8 13.1 0.8 13.8 0.8 14.6 C0.8 15.9 3.6 16.9 7 16.9 C10.4 16.9 13.2 15.9 13.2 14.6 C13.2 13.8 12.2 13.1 10 12.6" stroke="#333" stroke-width="1.2"/></svg>
<div style="position:absolute;left:436px;top:885px;width:280px;height:132px;box-sizing:border-box;border:1px solid #d9d9de;background:#e8e8eb"></div>
<svg style="position:absolute;left:568px;top:942.2px" width="16" height="16" viewBox="0 0 16 16" fill="none"><circle cx="8" cy="8" r="7.7" fill="#a3a6ae"/><rect x="3.3" y="7.35" width="9.4" height="1.3" fill="#e8e8eb"/></svg>
<div style="position:absolute;left:996px;top:885px;width:280px;height:132px;box-sizing:border-box;border:1px solid #d9d9de;background:#e8e8eb"></div>
<svg style="position:absolute;left:1128px;top:942.2px" width="16" height="16" viewBox="0 0 16 16" fill="none"><circle cx="8" cy="8" r="7.7" fill="#a3a6ae"/><rect x="3.3" y="7.35" width="9.4" height="1.3" fill="#e8e8eb"/></svg>
<div style="position:absolute;left:1276px;top:885px;width:280px;height:132px;box-sizing:border-box;border:1px solid #d9d9de;background:#e8e8eb"></div>
<svg style="position:absolute;left:1408px;top:942.2px" width="16" height="16" viewBox="0 0 16 16" fill="none"><circle cx="8" cy="8" r="7.7" fill="#a3a6ae"/><rect x="3.3" y="7.35" width="9.4" height="1.3" fill="#e8e8eb"/></svg>
<div style="position:absolute;left:1556px;top:885px;width:280px;height:132px;box-sizing:border-box;border:1px solid #d9d9de;background:#e8e8eb"></div>
<svg style="position:absolute;left:1688px;top:942.2px" width="16" height="16" viewBox="0 0 16 16" fill="none"><circle cx="8" cy="8" r="7.7" fill="#a3a6ae"/><rect x="3.3" y="7.35" width="9.4" height="1.3" fill="#e8e8eb"/></svg>
<div style="position:absolute;left:1836px;top:885px;width:280px;height:132px;box-sizing:border-box;border:1px solid #d9d9de;background:#e8e8eb"></div>
<svg style="position:absolute;left:1968px;top:942.2px" width="16" height="16" viewBox="0 0 16 16" fill="none"><circle cx="8" cy="8" r="7.7" fill="#a3a6ae"/><rect x="3.3" y="7.35" width="9.4" height="1.3" fill="#e8e8eb"/></svg>
<div style="position:absolute;left:2116px;top:885px;width:280px;height:132px;box-sizing:border-box;border:1px solid #d9d9de;background:#e8e8eb"></div>
<svg style="position:absolute;left:2248px;top:942.2px" width="16" height="16" viewBox="0 0 16 16" fill="none"><circle cx="8" cy="8" r="7.7" fill="#a3a6ae"/><rect x="3.3" y="7.35" width="9.4" height="1.3" fill="#e8e8eb"/></svg>
<div style="position:absolute;left:436px;top:1017px;width:279px;height:52px;box-sizing:border-box;border:1px solid #d9d9de;background:#e8e8eb"></div>
<svg style="position:absolute;left:567.8px;top:1034.4px" width="16" height="16" viewBox="0 0 16 16" fill="none"><circle cx="8" cy="8" r="7.7" fill="#a3a6ae"/><rect x="3.3" y="7.35" width="9.4" height="1.3" fill="#e8e8eb"/></svg>
<div style="position:absolute;left:717px;top:1017px;width:278px;height:52px;box-sizing:border-box;border:1px solid #d9d9de;background:#e8e8eb"></div>
<svg style="position:absolute;left:848.6500000000001px;top:1034.4px" width="16" height="16" viewBox="0 0 16 16" fill="none"><circle cx="8" cy="8" r="7.7" fill="#a3a6ae"/><rect x="3.3" y="7.35" width="9.4" height="1.3" fill="#e8e8eb"/></svg>
<div style="position:absolute;left:997px;top:1017px;width:278px;height:52px;box-sizing:border-box;border:1px solid #d9d9de;background:#e8e8eb"></div>
<svg style="position:absolute;left:1128.55px;top:1034.4px" width="16" height="16" viewBox="0 0 16 16" fill="none"><circle cx="8" cy="8" r="7.7" fill="#a3a6ae"/><rect x="3.3" y="7.35" width="9.4" height="1.3" fill="#e8e8eb"/></svg>
<div style="position:absolute;left:1277px;top:1017px;width:278px;height:52px;box-sizing:border-box;border:1px solid #d9d9de;background:#e8e8eb"></div>
<svg style="position:absolute;left:1408.4499999999998px;top:1034.4px" width="16" height="16" viewBox="0 0 16 16" fill="none"><circle cx="8" cy="8" r="7.7" fill="#a3a6ae"/><rect x="3.3" y="7.35" width="9.4" height="1.3" fill="#e8e8eb"/></svg>
<div style="position:absolute;left:1558px;top:1017px;width:278px;height:52px;box-sizing:border-box;border:1px solid #d9d9de;background:#e8e8eb"></div>
<svg style="position:absolute;left:1689.45px;top:1034.4px" width="16" height="16" viewBox="0 0 16 16" fill="none"><circle cx="8" cy="8" r="7.7" fill="#a3a6ae"/><rect x="3.3" y="7.35" width="9.4" height="1.3" fill="#e8e8eb"/></svg>
<div style="position:absolute;left:1838px;top:1017px;width:278px;height:52px;box-sizing:border-box;border:1px solid #d9d9de;background:#e8e8eb"></div>
<svg style="position:absolute;left:1969.3999999999999px;top:1034.4px" width="16" height="16" viewBox="0 0 16 16" fill="none"><circle cx="8" cy="8" r="7.7" fill="#a3a6ae"/><rect x="3.3" y="7.35" width="9.4" height="1.3" fill="#e8e8eb"/></svg>
<div style="position:absolute;left:2118px;top:1017px;width:278px;height:52px;box-sizing:border-box;border:1px solid #d9d9de;background:#e8e8eb"></div>
<svg style="position:absolute;left:2249.6px;top:1034.4px" width="16" height="16" viewBox="0 0 16 16" fill="none"><circle cx="8" cy="8" r="7.7" fill="#a3a6ae"/><rect x="3.3" y="7.35" width="9.4" height="1.3" fill="#e8e8eb"/></svg>
<div style="position:absolute;left:717px;top:885px;width:275px;height:129.5px;box-sizing:border-box;background:#f5f5f6;border:1px solid #bcc5fb;border-radius:5px"></div>
<div style="position:absolute;left:726.5px;top:899.2px;width:69.5px;height:25.5px;box-sizing:border-box;background:#fff;border:1px solid #e2e2e6;border-radius:13px"></div>
<div class="t" style="left:735.54px;top:912.00px;font-size:16.25px;font-weight:bold;color:#111;">Empty</div>
<div class="t" style="left:725.99px;top:946.00px;font-size:17.71px;font-weight:bold;color:#111;">09:00 AM - 05:00 PM</div>
<div class="t" style="left:725.95px;top:988.50px;font-size:16.75px;font-weight:normal;color:#111;">8hrs 0m</div>
<div style="position:absolute;left:945.0px;top:894.5px;width:33px;height:33px;box-sizing:border-box;background:#e8e9eb;border-radius:50%"></div>
<svg style="position:absolute;left:952.5px;top:902px" width="18" height="18" viewBox="0 0 18 18" fill="none"><path d="M0.9 16.9 L1.3 14.0 L10.4 5.6 L12.5 7.9 L3.5 16.3 Z" stroke="#333" stroke-width="1.25" stroke-linejoin="round"/><path d="M11.5 4.5 L12.9 3.2 C13.6 2.6 14.6 2.6 15.2 3.3 C15.8 3.9 15.8 4.9 15.1 5.5 L13.7 6.8 Z" stroke="#333" stroke-width="1.25" stroke-linejoin="round"/></svg>
<div style="position:absolute;left:436px;top:1072.4px;width:1960px;height:41px;box-sizing:border-box;background:#f9fafa"></div>
<svg style="position:absolute;left:441px;top:1086.9px" width="19" height="11" viewBox="0 0 19 11" fill="none"><path d="M1 1 L9.5 9.5 L18 1" stroke="#333" stroke-width="1.3" fill="none"/></svg>
<div style="position:absolute;left:468px;top:1084.1000000000001px;width:9px;height:17px;box-sizing:border-box;background:#30bbe8;border-radius:5px"></div>
<div class="t" style="left:485.46px;top:1091.00px;font-size:16.04px;font-weight:bold;color:#111;">Roy Keypay HR / Melbourne</div>
<svg style="position:absolute;left:710.3px;top:1082.9px" width="14" height="18" viewBox="0 0 14 18" fill="none"><path d="M7 14.2 C4 10.5 1.5 8 1.5 5.8 A5.5 5.5 0 0 1 12.5 5.8 C12.5 8 10 10.5 7 14.2 Z" stroke="#333" stroke-width="1.2"/><circle cx="7" cy="5.8" r="2.2" stroke="#333" stroke-width="1.2"/><path d="M4 12.6 C1.8 13.1 0.8 13.8 0.8 14.6 C0.8 15.9 3.6 16.9 7 16.9 C10.4 16.9 13.2 15.9 13.2 14.6 C13.2 13.8 12.2 13.1 10 12.6" stroke="#333" stroke-width="1.2"/></svg>
<div style="position:absolute;left:1556px;top:1114px;width:280px;height:132px;box-sizing:border-box;border:1px solid #d9d9de;background:#fff"></div>
<div style="position:absolute;left:1556px;top:1248px;width:280px;height:120px;box-sizing:border-box;border:1px solid #d9d9de;background:#fff"></div>
<div style="position:absolute;left:1836px;top:1114px;width:280px;height:132px;box-sizing:border-box;border:1px solid #d9d9de;background:#fff"></div>
<div style="position:absolute;left:1836px;top:1248px;width:280px;height:120px;box-sizing:border-box;border:1px solid #d9d9de;background:#fff"></div>
<div style="position:absolute;left:2116px;top:1114px;width:280px;height:132px;box-sizing:border-box;border:1px solid #d9d9de;background:#fff"></div>
<div style="position:absolute;left:2116px;top:1248px;width:280px;height:120px;box-sizing:border-box;border:1px solid #d9d9de;background:#fff"></div>
<div style="position:absolute;left:436.4px;top:1114.3px;width:275.5px;height:130px;box-sizing:border-box;background:#f5f5f6;border:1px solid #bcc5fb;border-radius:5px"></div>
<div class="t" style="left:445.04px;top:1140.00px;font-size:16.30px;font-weight:bold;color:#111;">Betty B</div>
<div class="t" style="left:445.40px;top:1173.00px;font-size:17.39px;font-weight:bold;color:#111;">08:00 AM - 08:15 AM</div>
<div class="t" style="left:445.45px;top:1216.00px;font-size:16.14px;font-weight:normal;color:#111;">0hrs 15m</div>
<div class="t" style="left:530.36px;top:1216.00px;font-size:16.06px;font-weight:bold;color:#7b20d2;">$12.91</div>
<svg style="position:absolute;left:595.5px;top:1207.5px" width="18" height="18" viewBox="0 0 18 18" fill="none"><circle cx="9" cy="9" r="7.8" fill="#7b20d2"/><path d="M4.2 8.6 L7.3 11.6 L14.6 4.3" stroke="#fff" stroke-width="1.3" fill="none"/></svg>
<div style="position:absolute;left:664.9px;top:1123.8px;width:33px;height:33px;box-sizing:border-box;background:#e8e9eb;border-radius:50%"></div>
<svg style="position:absolute;left:672.4px;top:1131.3px" width="18" height="18" viewBox="0 0 18 18" fill="none"><path d="M0.9 16.9 L1.3 14.0 L10.4 5.6 L12.5 7.9 L3.5 16.3 Z" stroke="#333" stroke-width="1.25" stroke-linejoin="round"/><path d="M11.5 4.5 L12.9 3.2 C13.6 2.6 14.6 2.6 15.2 3.3 C15.8 3.9 15.8 4.9 15.1 5.5 L13.7 6.8 Z" stroke="#333" stroke-width="1.25" stroke-linejoin="round"/></svg>
<div style="position:absolute;left:717px;top:1114.3px;width:275.5px;height:130px;box-sizing:border-box;background:#f5f5f6;border:1px solid #bcc5fb;border-radius:5px"></div>
<div style="position:absolute;left:726.5px;top:1128.5px;width:69.5px;height:25.5px;box-sizing:border-box;background:#fff;border:1px solid #e2e2e6;border-radius:13px"></div>
<div class="t" style="left:735.54px;top:1142.00px;font-size:16.25px;font-weight:bold;color:#111;">Empty</div>
<div class="t" style="left:725.99px;top:1174.00px;font-size:17.74px;font-weight:bold;color:#111;">09:00 AM - 05:00 PM</div>
<div class="t" style="left:725.95px;top:1216.50px;font-size:16.75px;font-weight:normal;color:#111;">8hrs 0m</div>
<div style="position:absolute;left:945.5px;top:1123.8px;width:33px;height:33px;box-sizing:border-box;background:#e8e9eb;border-radius:50%"></div>
<svg style="position:absolute;left:953.0px;top:1131.3px" width="18" height="18" viewBox="0 0 18 18" fill="none"><path d="M0.9 16.9 L1.3 14.0 L10.4 5.6 L12.5 7.9 L3.5 16.3 Z" stroke="#333" stroke-width="1.25" stroke-linejoin="round"/><path d="M11.5 4.5 L12.9 3.2 C13.6 2.6 14.6 2.6 15.2 3.3 C15.8 3.9 15.8 4.9 15.1 5.5 L13.7 6.8 Z" stroke="#333" stroke-width="1.25" stroke-linejoin="round"/></svg>
<div style="position:absolute;left:996.4px;top:1114.3px;width:275.5px;height:130px;box-sizing:border-box;background:#f5f5f6;border:1px solid #bcc5fb;border-radius:5px"></div>
<div class="t" style="left:1005.04px;top:1140.00px;font-size:16.30px;font-weight:bold;color:#111;">Betty B</div>
<div class="t" style="left:1005.39px;top:1173.00px;font-size:17.71px;font-weight:bold;color:#111;">09:00 AM - 05:00 PM</div>
<div class="t" style="left:1005.35px;top:1216.50px;font-size:16.75px;font-weight:normal;color:#111;">8hrs 0m</div>
<div class="t" style="left:1083.93px;top:1216.00px;font-size:17.73px;font-weight:bold;color:#7b20d2;">$412.96</div>
<svg style="position:absolute;left:1165px;top:1207.5px" width="18" height="18" viewBox="0 0 18 18" fill="none"><circle cx="9" cy="9" r="7.8" fill="#7b20d2"/><path d="M4.2 8.6 L7.3 11.6 L14.6 4.3" stroke="#fff" stroke-width="1.3" fill="none"/></svg>
<div style="position:absolute;left:1224.9px;top:1123.8px;width:33px;height:33px;box-sizing:border-box;background:#e8e9eb;border-radius:50%"></div>
<svg style="position:absolute;left:1232.4px;top:1131.3px" width="18" height="18" viewBox="0 0 18 18" fill="none"><path d="M0.9 16.9 L1.3 14.0 L10.4 5.6 L12.5 7.9 L3.5 16.3 Z" stroke="#333" stroke-width="1.25" stroke-linejoin="round"/><path d="M11.5 4.5 L12.9 3.2 C13.6 2.6 14.6 2.6 15.2 3.3 C15.8 3.9 15.8 4.9 15.1 5.5 L13.7 6.8 Z" stroke="#333" stroke-width="1.25" stroke-linejoin="round"/></svg>
<div style="position:absolute;left:1276.5px;top:1114.3px;width:275.5px;height:130px;box-sizing:border-box;background:#eef0fd;border-radius:6px"></div>
<div style="position:absolute;left:1285.5px;top:1127.5px;width:61.5px;height:27px;box-sizing:border-box;background:#7b20d2;border-radius:14px"></div>
<div class="t" style="left:1295.45px;top:1141.00px;font-size:16.37px;font-weight:bold;color:#fff;">Open</div>
<div class="t" style="left:1285.49px;top:1174.00px;font-size:17.71px;font-weight:bold;color:#111;">09:00 AM - 05:00 PM</div>
<div class="t" style="left:1285.45px;top:1216.50px;font-size:16.75px;font-weight:normal;color:#111;">8hrs 0m</div>
<div style="position:absolute;left:1506.0px;top:1123.1px;width:33px;height:33px;box-sizing:border-box;background:#b8c3f7;border-radius:50%"></div>
<svg style="position:absolute;left:1513.5px;top:1130.6px" width="18" height="18" viewBox="0 0 18 18" fill="none"><path d="M1.2 8.6 L15.8 0.9 L14.6 13.8 L6.8 10.6 Z" stroke="#333" stroke-width="1.3" stroke-linejoin="round"/><path d="M6.8 10.6 L12.6 5.2" stroke="#333" stroke-width="1.3"/><path d="M6.2 10.2 L6.9 15.0 L9.0 11.6 Z" fill="#333" stroke="#333" stroke-width="0.8" stroke-linejoin="round"/></svg>
<div style="position:absolute;left:1512.0px;top:1208.3px;width:27px;height:27px;box-sizing:border-box;background:#7b20d2;border-radius:50%"></div>
<div class="t" style="left:1521.24px;top:1221.50px;font-size:15.50px;font-weight:bold;color:#fff;">2</div>
<div style="position:absolute;left:436.4px;top:1248.5px;width:275.5px;height:130px;box-sizing:border-box;background:#f5f5f6;border:1px solid #bcc5fb;border-radius:5px"></div>
<div class="t" style="left:445.69px;top:1274.00px;font-size:16.30px;font-weight:bold;color:#111;">Andrew A</div>
<div class="t" style="left:445.39px;top:1307.00px;font-size:17.71px;font-weight:bold;color:#111;">09:00 AM - 05:00 PM</div>
<div style="position:absolute;left:664.9px;top:1258.0px;width:33px;height:33px;box-sizing:border-box;background:#e8e9eb;border-radius:50%"></div>
<svg style="position:absolute;left:672.4px;top:1265.5px" width="18" height="18" viewBox="0 0 18 18" fill="none"><path d="M0.9 16.9 L1.3 14.0 L10.4 5.6 L12.5 7.9 L3.5 16.3 Z" stroke="#333" stroke-width="1.25" stroke-linejoin="round"/><path d="M11.5 4.5 L12.9 3.2 C13.6 2.6 14.6 2.6 15.2 3.3 C15.8 3.9 15.8 4.9 15.1 5.5 L13.7 6.8 Z" stroke="#333" stroke-width="1.25" stroke-linejoin="round"/></svg>
<div style="position:absolute;left:717px;top:1248.5px;width:275.5px;height:130px;box-sizing:border-box;background:#f5f5f6;border:1px solid #bcc5fb;border-radius:5px"></div>
<div style="position:absolute;left:726px;top:1261.7px;width:61.5px;height:27px;box-sizing:border-box;background:#7b20d2;border-radius:14px"></div>
<div class="t" style="left:735.95px;top:1275.00px;font-size:16.37px;font-weight:bold;color:#fff;">Open</div>
<div class="t" style="left:725.99px;top:1308.00px;font-size:17.71px;font-weight:bold;color:#111;">09:00 AM - 05:00 PM</div>
<div style="position:absolute;left:945.5px;top:1258.0px;width:33px;height:33px;box-sizing:border-box;background:#e8e9eb;border-radius:50%"></div>
<svg style="position:absolute;left:953.0px;top:1265.5px" width="18" height="18" viewBox="0 0 18 18" fill="none"><path d="M0.9 16.9 L1.3 14.0 L10.4 5.6 L12.5 7.9 L3.5 16.3 Z" stroke="#333" stroke-width="1.25" stroke-linejoin="round"/><path d="M11.5 4.5 L12.9 3.2 C13.6 2.6 14.6 2.6 15.2 3.3 C15.8 3.9 15.8 4.9 15.1 5.5 L13.7 6.8 Z" stroke="#333" stroke-width="1.25" stroke-linejoin="round"/></svg>
<div style="position:absolute;left:996.4px;top:1248.5px;width:275.5px;height:130px;box-sizing:border-box;background:#eef0fd;border-radius:6px"></div>
<div class="t" style="left:1005.45px;top:1273.00px;font-size:16.30px;font-weight:bold;color:#111;">Chip Truong</div>
<div class="t" style="left:1005.39px;top:1307.00px;font-size:17.71px;font-weight:bold;color:#111;">09:00 AM - 05:00 PM</div>
<div style="position:absolute;left:1225.9px;top:1257.3px;width:33px;height:33px;box-sizing:border-box;background:#b8c3f7;border-radius:50%"></div>
<svg style="position:absolute;left:1233.4px;top:1264.8px" width="18" height="18" viewBox="0 0 18 18" fill="none"><path d="M1.2 8.6 L15.8 0.9 L14.6 13.8 L6.8 10.6 Z" stroke="#333" stroke-width="1.3" stroke-linejoin="round"/><path d="M6.8 10.6 L12.6 5.2" stroke="#333" stroke-width="1.3"/><path d="M6.2 10.2 L6.9 15.0 L9.0 11.6 Z" fill="#333" stroke="#333" stroke-width="0.8" stroke-linejoin="round"/></svg>
<div style="position:absolute;left:1276.5px;top:1248.5px;width:275.5px;height:130px;box-sizing:border-box;background:#f5f5f6;border:1px solid #bcc5fb;border-radius:5px"></div>
<div class="t" style="left:1285.79px;top:1274.00px;font-size:16.30px;font-weight:bold;color:#111;">Andrew A</div>
<div class="t" style="left:1285.49px;top:1307.00px;font-size:17.71px;font-weight:bold;color:#111;">09:00 AM - 05:00 PM</div>
<div style="position:absolute;left:1505.0px;top:1258.0px;width:33px;height:33px;box-sizing:border-box;background:#e8e9eb;border-radius:50%"></div>
<svg style="position:absolute;left:1512.5px;top:1265.5px" width="18" height="18" viewBox="0 0 18 18" fill="none"><path d="M0.9 16.9 L1.3 14.0 L10.4 5.6 L12.5 7.9 L3.5 16.3 Z" stroke="#333" stroke-width="1.25" stroke-linejoin="round"/><path d="M11.5 4.5 L12.9 3.2 C13.6 2.6 14.6 2.6 15.2 3.3 C15.8 3.9 15.8 4.9 15.1 5.5 L13.7 6.8 Z" stroke="#333" stroke-width="1.25" stroke-linejoin="round"/></svg>
<div style="position:absolute;left:2362px;top:1235px;width:70px;height:70px;box-sizing:border-box;background:#7b20d2;border-radius:50%"></div>
<svg style="position:absolute;left:2378px;top:1257px" width="40" height="34" viewBox="0 0 40 34" fill="none"><rect x="0.6" y="1.9" width="36.5" height="18.3" rx="9.15" fill="#fff"/><path d="M22.6 23.9 L30.1 23.9 L30.1 31 Z" fill="#fff"/></svg>
<div style="position:absolute;left:2435px;top:0px;width:1px;height:1322px;box-sizing:border-box;background:#e6e6e6"></div>
<div style="position:absolute;left:2436px;top:0px;width:11px;height:1322px;box-sizing:border-box;background:#fafafa"></div>
<div style="position:absolute;left:2439px;top:0px;width:8px;height:809px;box-sizing:border-box;background:#bdbdbd;border-radius:0 0 4px 4px"></div>
<div style="position:absolute;left:0px;top:0px;width:1px;height:1322px;box-sizing:border-box;background:#bbb"></div>
<div style="position:absolute;left:1px;top:0px;width:3.8px;height:1322px;box-sizing:border-box;background:#000"></div>
<div style="position:absolute;left:0px;top:0px;width:2450px;height:3px;box-sizing:border-box;background:#000"></div>
<div style="position:absolute;left:2447px;top:0px;width:3px;height:1322px;box-sizing:border-box;background:#000"></div>
<div style="position:absolute;left:0px;top:1317px;width:2450px;height:4px;box-sizing:border-box;background:#000"></div>
<div style="position:absolute;left:0px;top:1321px;width:2450px;height:1px;box-sizing:border-box;background:#bbb"></div>
</body></html>
